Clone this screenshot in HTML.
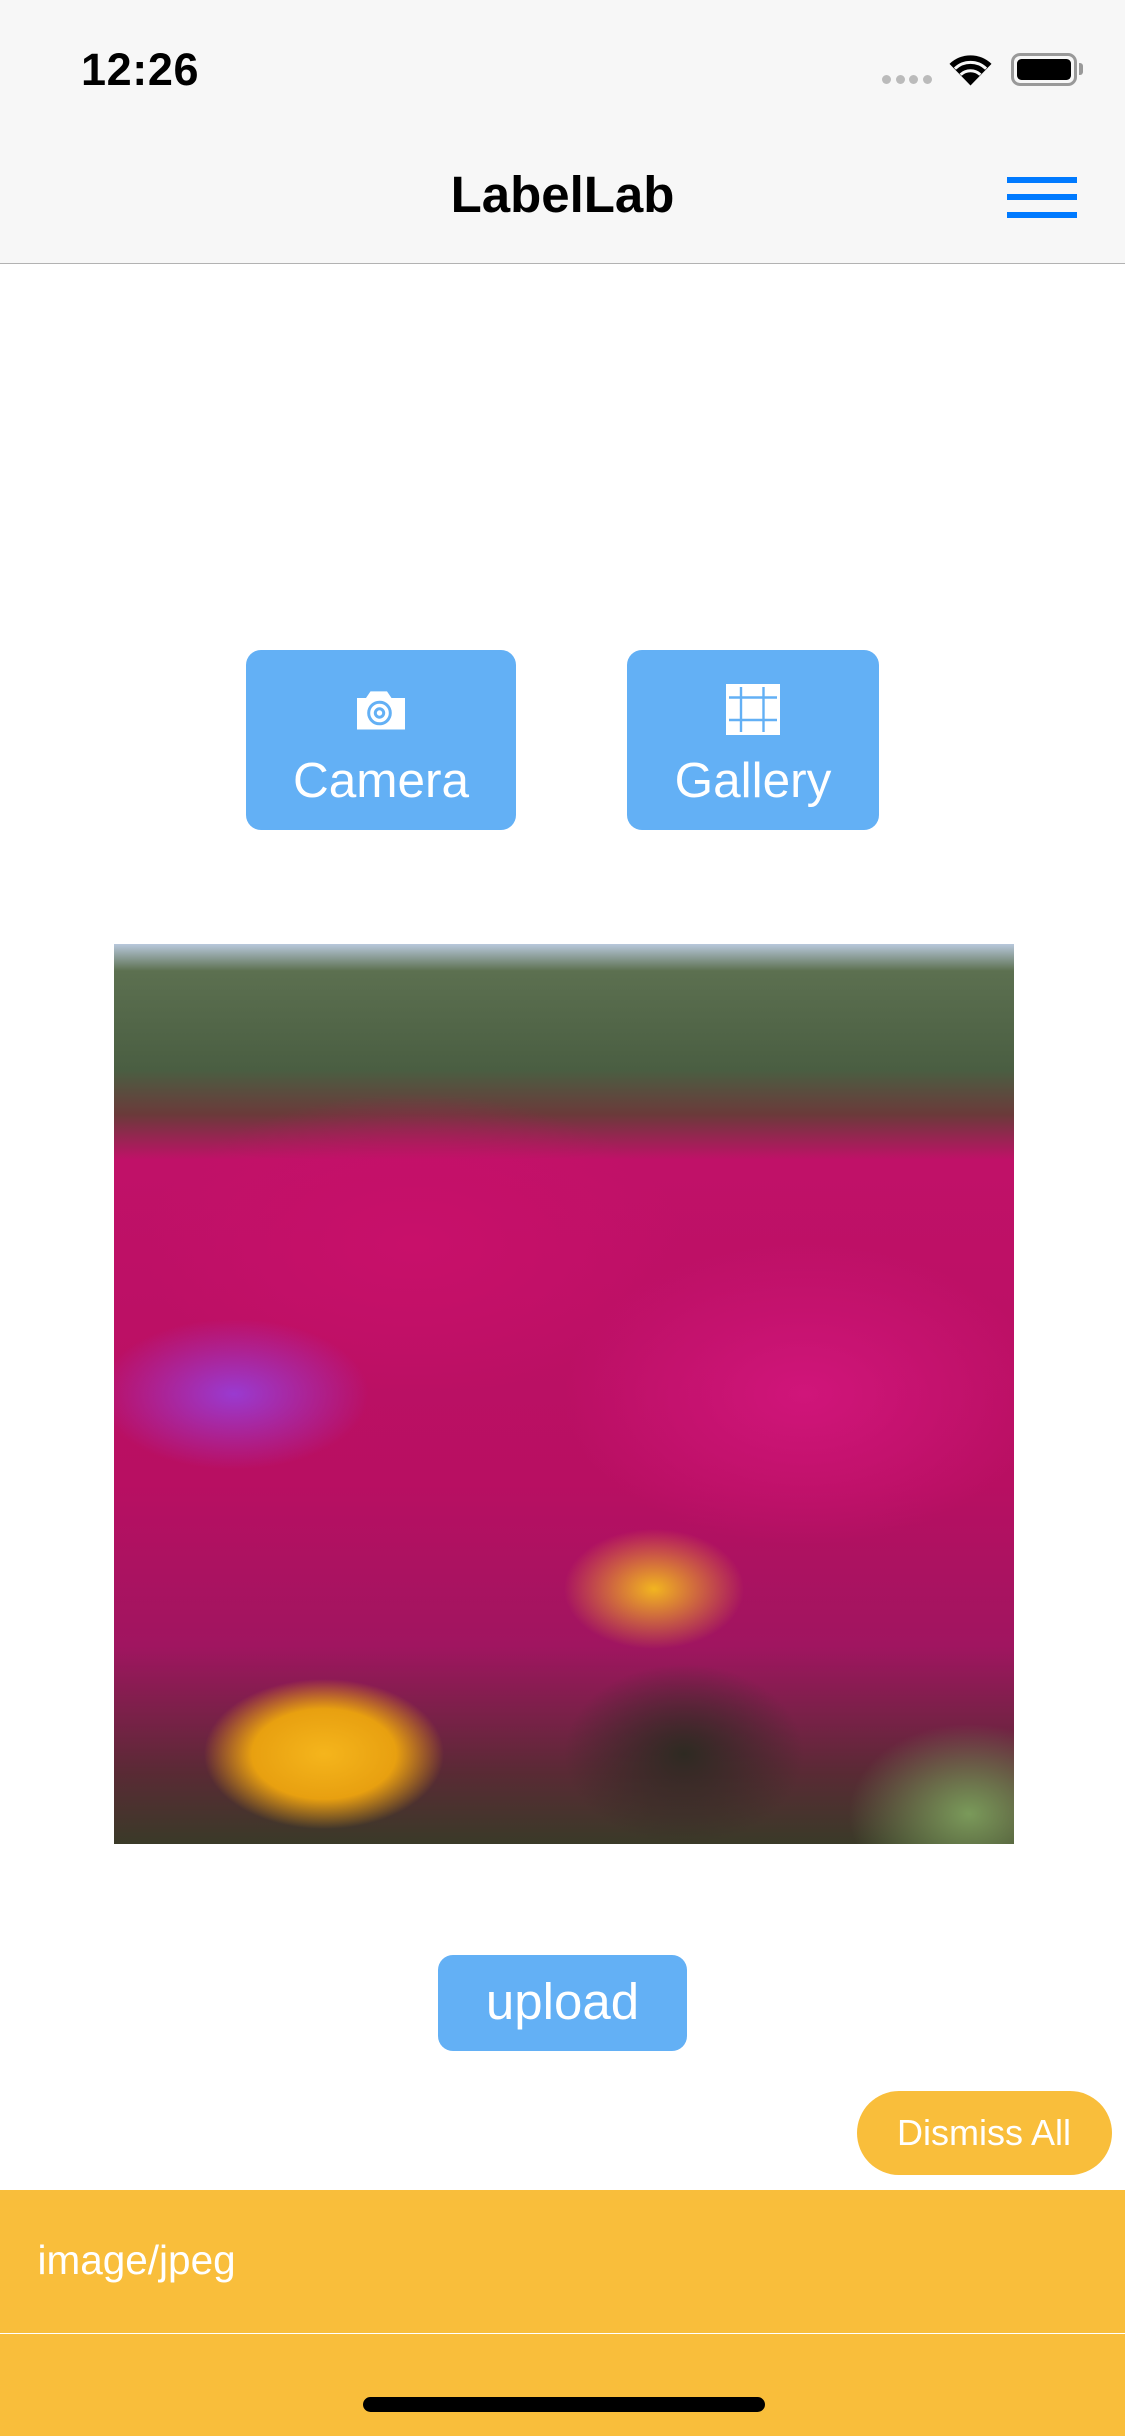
<!DOCTYPE html>
<html><head><meta charset="utf-8"><style>
*{margin:0;padding:0;box-sizing:border-box}
html,body{width:1125px;height:2436px;overflow:hidden;background:#fff}
#w{zoom:3;width:375px;height:812px;position:relative;font-family:"Liberation Sans",sans-serif}
.a{position:absolute}
.nav{left:0;top:0;width:375px;height:88px;background:#f7f7f7;border-bottom:0.5px solid #b2b2b2}
.btn{background:#63b0f5;border-radius:5px;color:#fff;text-align:center}
</style></head><body><div id="w">
<div class="a nav"></div>
<div class="a" style="left:27px;top:14.5px;font-size:15px;font-weight:bold;letter-spacing:0.2px">12:26</div>
<div class="a" style="left:294px;top:25px;width:17px;height:3px">
 <span class="a" style="left:0;top:0;width:3px;height:3px;border-radius:1.5px;background:#bbb"></span>
 <span class="a" style="left:4.5px;top:0;width:3px;height:3px;border-radius:1.5px;background:#bbb"></span>
 <span class="a" style="left:9px;top:0;width:3px;height:3px;border-radius:1.5px;background:#bbb"></span>
 <span class="a" style="left:13.5px;top:0;width:3px;height:3px;border-radius:1.5px;background:#bbb"></span>
</div>
<svg class="a" style="left:316px;top:17px" width="15" height="12" viewBox="0 0 15 12"><path d="M7.5 11.5 L0.5 4.3 A10 10 0 0 1 14.5 4.3 Z" fill="#000"/><path d="M2.3 5.9 A7.5 7.5 0 0 1 12.7 5.9" stroke="#f7f7f7" stroke-width="1" fill="none"/><path d="M4.2 7.9 A4.8 4.8 0 0 1 10.8 7.9" stroke="#f7f7f7" stroke-width="1" fill="none"/></svg>
<div class="a" style="left:337px;top:17.5px;width:22px;height:11px;border:1px solid #999;border-radius:3px;padding:1px"><div style="width:100%;height:100%;background:#000;border-radius:1.5px"></div></div>
<div class="a" style="left:359.5px;top:21px;width:1.5px;height:4px;background:#999;border-radius:0 1px 1px 0"></div>
<div class="a" style="left:0;width:375px;top:55px;text-align:center;font-size:17px;font-weight:bold">LabelLab</div>
<div class="a" style="left:335.5px;top:59px;width:23.5px;height:2px;background:#007aff"></div>
<div class="a" style="left:335.5px;top:64.5px;width:23.5px;height:2px;background:#007aff"></div>
<div class="a" style="left:335.5px;top:70.5px;width:23.5px;height:2px;background:#007aff"></div>

<div class="a btn" style="left:82px;top:216.5px;width:90px;height:60px">
 <svg style="position:absolute;left:36px;top:13px" width="18" height="14" viewBox="0 0 18 14"><path d="M1 3h3l1.5-2.2h5.5L12.5 3H17v10.5H1z" fill="#fff"/><circle cx="8.5" cy="8" r="3.6" fill="none" stroke="#63b0f5" stroke-width="1"/><circle cx="8.5" cy="8" r="1.4" fill="none" stroke="#63b0f5" stroke-width="1"/></svg>
 <div style="position:absolute;left:0;right:0;top:34px;font-size:16.5px">Camera</div>
</div>
<div class="a btn" style="left:209px;top:216.5px;width:84px;height:60px">
 <svg style="position:absolute;left:33px;top:11.5px" width="18" height="17" viewBox="0 0 18 17"><rect width="18" height="17" fill="#fff"/><path d="M5 1v15M12.5 1v15M1 4.5h16M1 12h16" stroke="#63b0f5" stroke-width="0.8"/></svg>
 <div style="position:absolute;left:0;right:0;top:34px;font-size:16.5px">Gallery</div>
</div>

<div class="a" style="left:38px;top:314.5px;width:300px;height:300px;overflow:hidden;background:
radial-gradient(ellipse 40px 25px at 70px 270px,#f5b51c 0,#e8a010 60%,transparent 100%),
radial-gradient(ellipse 30px 20px at 180px 215px,#f2b520 0,transparent 100%),
radial-gradient(ellipse 40px 30px at 285px 290px,#7a9a5a 0,transparent 100%),
radial-gradient(ellipse 45px 25px at 40px 150px,#9a3ad0 0,transparent 100%),
radial-gradient(ellipse 40px 30px at 190px 270px,#2e2a22 0,transparent 100%),
radial-gradient(ellipse 80px 50px at 230px 150px,#d0157a 0,transparent 100%),
radial-gradient(ellipse 90px 50px at 100px 100px,#c8106a 0,transparent 100%),
linear-gradient(180deg,#b8c8dc 0,#5c7050 3%,#4a5e42 14%,#6b3a3a 19%,#c01168 24%,#b80f62 60%,#a01560 78%,#5a2a35 92%,#3a3a28 100%)"></div>

<div class="a btn" style="left:146px;top:651.5px;width:83px;height:32px;font-size:17px;line-height:31px">upload</div>
<div class="a" style="left:285.5px;top:697px;width:85px;height:28px;border-radius:14px;background:#f9be3b;color:#fff;font-size:12px;text-align:center;line-height:28px">Dismiss All</div>
<div class="a" style="left:0;top:730px;width:375px;height:82px;background:#f9be3b"></div>
<div class="a" style="left:0;top:777.5px;width:375px;height:0.5px;background:#fff"></div>
<div class="a" style="left:12.5px;top:745.5px;color:#fff;font-size:13.5px">image/jpeg</div>
<div class="a" style="left:121px;top:799px;width:134px;height:5px;border-radius:2.5px;background:#000"></div>
</div></body></html>
